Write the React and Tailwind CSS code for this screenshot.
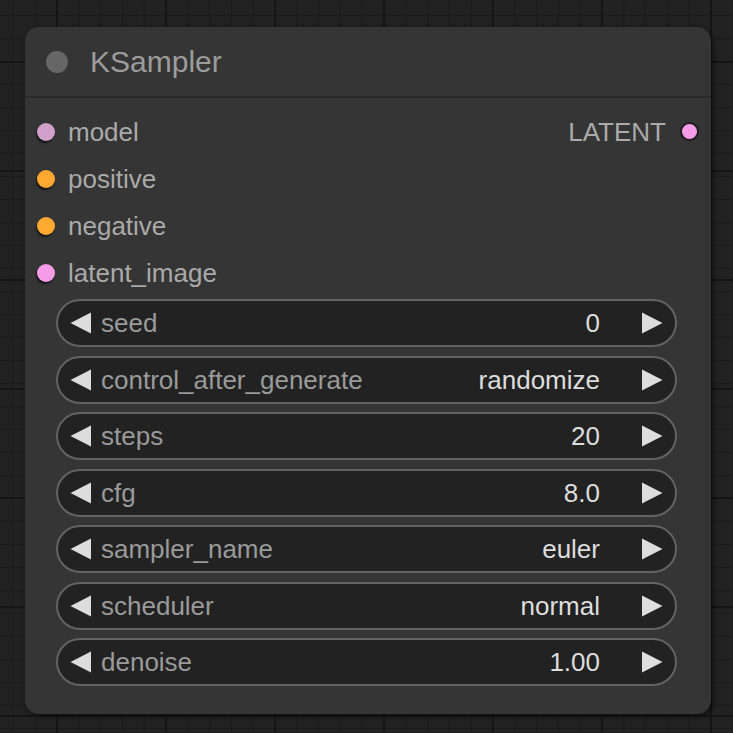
import React from "react";

const font = { fontFamily: '"Liberation Sans", Arial, sans-serif' };

function Tri({ dir }) {
  return (
    <svg width="22" height="22" viewBox="0 0 22 22" className="shrink-0">
      {dir === "left" ? (
        <polygon points="21,0.5 21,21.5 0.5,11" fill="#dddddd" />
      ) : (
        <polygon points="1,0.5 1,21.5 21.5,11" fill="#dddddd" />
      )}
    </svg>
  );
}

function Widget({ label, value }) {
  return (
    <div className="h-[48px] rounded-full border-2 border-[#636363] bg-[#222222] flex items-center pl-[12px] pr-[12px]">
      <Tri dir="left" />
      <span className="ml-[9px] text-[26px] text-[#9a9a9a] leading-none">{label}</span>
      <span className="ml-auto text-[26px] text-[#dddddd] leading-none">{value}</span>
      <span className="w-[41px]" />
      <Tri dir="right" />
    </div>
  );
}

function Slot({ color, label, dotted }) {
  return (
    <div className="h-[47px] flex items-center pl-[12px]">
      <span
        className={
          "w-[18px] h-[18px] rounded-full shrink-0 shadow-[-1px_2px_2px_rgba(0,0,0,0.6)] " +
          (dotted
            ? "bg-[#d7a2d0] bg-[radial-gradient(#a09aa0_0.7px,transparent_0.8px)] bg-[size:2.5px_2.5px]"
            : color)
        }
      />
      <span className="ml-[13px] text-[26px] text-[#aaaaaa] leading-none">{label}</span>
    </div>
  );
}

export default function App() {
  const widgets = [
    ["seed", "0"],
    ["control_after_generate", "randomize"],
    ["steps", "20"],
    ["cfg", "8.0"],
    ["sampler_name", "euler"],
    ["scheduler", "normal"],
    ["denoise", "1.00"],
  ];
  return (
    <div
      style={font}
      className="w-[733px] h-[733px] overflow-hidden bg-[#222222] bg-[linear-gradient(to_right,#151515_2px,transparent_2px),linear-gradient(to_bottom,#151515_2px,transparent_2px),linear-gradient(to_right,#1b1b1b_1px,transparent_1px),linear-gradient(to_bottom,#1b1b1b_1px,transparent_1px)] bg-[size:109px_109px,109px_109px,21.8px_23px,21.8px_23px] bg-[position:56px_61px,56px_61px,13px_15px,13px_15px] pt-[27px] pl-[25px]"
    >
      <div className="w-[686px] h-[687px] rounded-[14px] bg-[#353535] shadow-[2px_2px_6px_rgba(0,0,0,0.55)] flex flex-col overflow-hidden">
        <div className="h-[71px] flex items-center pl-[21px] border-b-2 border-[#2a2a2a] shrink-0">
          <span className="w-[22px] h-[22px] rounded-full bg-[#666666] shrink-0" />
          <span className="ml-[22px] text-[30px] text-[#9c9c9c] leading-none">KSampler</span>
        </div>
        <div className="pt-[10px] flex">
          <div className="flex-1 flex flex-col">
            <Slot dotted label="model" />
            <Slot color="bg-[#ffa931]" label="positive" />
            <Slot color="bg-[#ffa931]" label="negative" />
            <Slot color="bg-[#f59ce6]" label="latent_image" />
          </div>
          <div className="h-[47px] flex items-center pr-[12px]">
            <span className="text-[26px] text-[#aaaaaa] leading-none">LATENT</span>
            <span className="ml-[14px] w-[19px] h-[19px] rounded-full bg-[#f59ce6] border-2 border-[#1e1e1e] shrink-0" />
          </div>
        </div>
        <div className="mt-[3px] ml-[31px] mr-[34px] flex flex-col gap-[8.5px]">
          {widgets.map(([l, v]) => (
            <Widget key={l} label={l} value={v} />
          ))}
        </div>
      </div>
    </div>
  );
}
